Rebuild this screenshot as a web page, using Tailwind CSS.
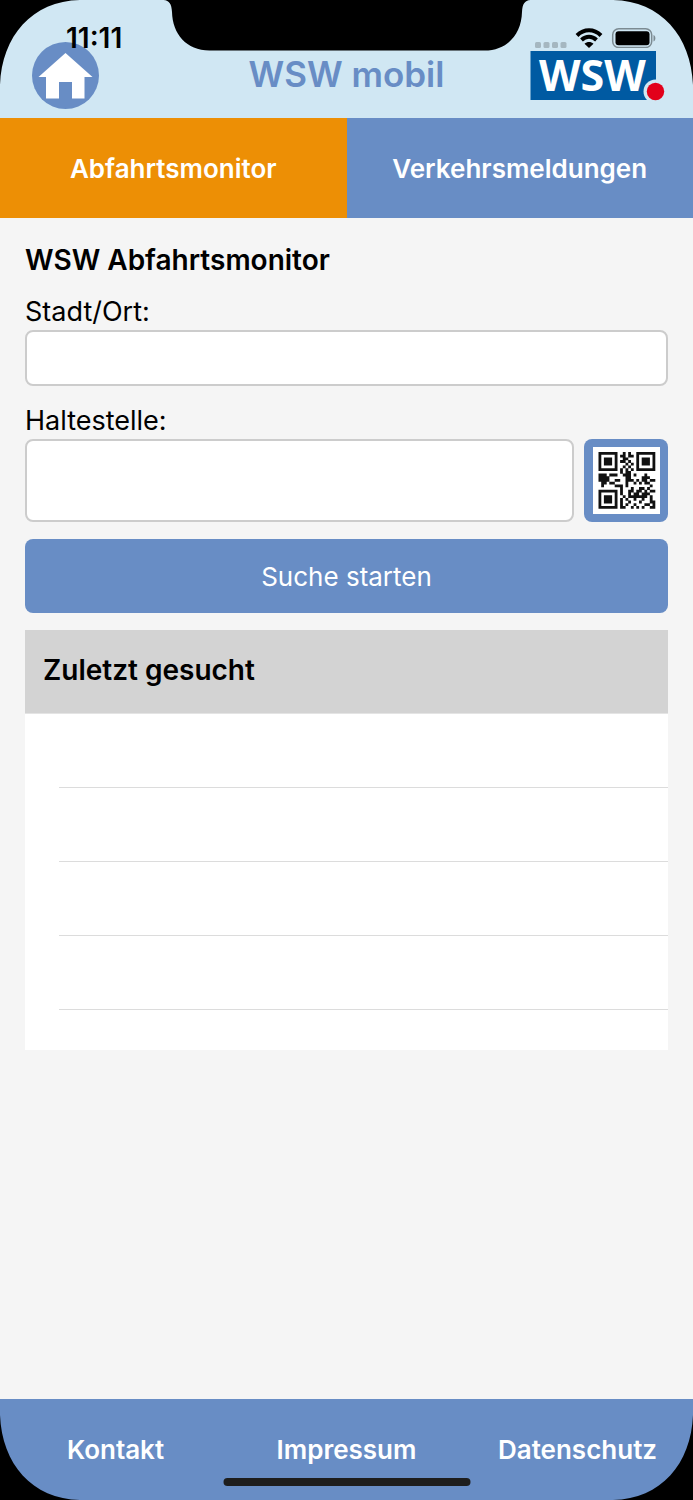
<!DOCTYPE html>
<html lang="de">
<head>
<meta charset="utf-8">
<meta name="viewport" content="width=device-width, initial-scale=1">
<title>WSW mobil</title>
<script src="https://cdn.jsdelivr.net/npm/@tailwindcss/browser@4"></script>
</head>
<body class="bg-black font-['Inter','Liberation_Sans',sans-serif] text-black">
<div class="relative flex min-h-screen flex-col overflow-hidden bg-[#f5f5f5]">

  <header class="relative flex h-[118px] items-end justify-between bg-[#d0e7f3] pr-7 pb-[9px] pl-8">
    <a href="#home" aria-label="Startseite" class="block">
      <svg class="block size-[67px]" viewBox="0 0 67 67" aria-hidden="true">
        <circle cx="33.500" cy="33.500" r="33.500" fill="#688dc5"/>
        <path d="M33.500 11 L60.500 35 H52.500 V56.500 H40 V40 H27 V56.500 H14 V35 H6.500 Z" fill="#fff"/>
      </svg>
    </a>
    <h1 class="absolute inset-x-0 bottom-6 text-center text-[35px] leading-10 font-semibold text-[#688dc5]">WSW mobil</h1>
    <svg class="mb-2 block h-[50px] w-[135px] overflow-visible" viewBox="0 0 135 50" role="img" aria-label="WSW">
      <rect x="0.500" width="125.500" height="49" fill="#005aa2"/>
      <text x="9" y="40" font-family="Open Sans, Noto Sans, sans-serif" font-weight="700" font-size="43" fill="#fff">WSW</text>
      <circle cx="125.500" cy="40.500" r="12" fill="#d0e7f3"/>
      <circle cx="125.500" cy="40.500" r="8.700" fill="#e2001a"/>
    </svg>
    <div class="absolute top-6 left-[66px] text-[28px] leading-7 font-semibold">11:11</div>
    <div class="absolute top-7 right-9 flex h-5 items-center gap-2" aria-hidden="true">
      <svg class="h-5 w-8" viewBox="0 0 32 20" fill="#a5b7c0"><rect x="0" y="14" width="6" height="6" rx="1.500"/><rect x="8.500" y="14" width="6" height="6" rx="1.500"/><rect x="17" y="14" width="6" height="6" rx="1.500"/><rect x="25.500" y="14" width="6" height="6" rx="1.500"/></svg>
      <svg class="h-5 w-[28px]" viewBox="0 0 28 20" fill="none" stroke="#000" stroke-width="4"><path d="M2 7.500 C9 0.500 19 0.500 26 7.500"/><path d="M6.500 12 C11 7.800 17 7.800 21.500 12"/><path d="M14 20 L9.500 15.700 C12 13.300 16 13.300 18.500 15.700Z" fill="#000" stroke="none"/></svg>
      <svg class="h-5 w-[46px]" viewBox="0 0 46 20"><rect x="1.700" y="0.800" width="39" height="18.700" rx="6" fill="none" stroke="#7c8b92" stroke-width="1.500"/><rect x="4.500" y="3.200" width="34" height="14" rx="3"/><path d="M42.500 7 C45 8 45 12.500 42.500 13.500Z" fill="#7c8b92"/></svg>
    </div>
  </header>

  <nav class="grid h-[100px] grid-cols-2 text-[26px] font-semibold text-white">
    <a href="#abfahrt" aria-current="page" class="flex items-center justify-center bg-[#ed8f05]">Abfahrtsmonitor</a>
    <a href="#meldungen" class="flex items-center justify-center bg-[#688dc5]">Verkehrsmeldungen</a>
  </nav>

  <main class="flex-1 px-[25px] pt-6">
    <h2 class="text-[28px] leading-9 font-semibold">WSW Abfahrtsmonitor</h2>
    <form class="mt-4">
      <label for="ort" class="block text-[27px] leading-9">Stadt/Ort:</label>
      <input id="ort" type="text" class="block h-14 w-full rounded-lg border-2 border-[#cccccc] bg-white px-4 text-[27px]">
      <label for="halt" class="mt-[17px] block text-[27px] leading-9">Haltestelle:</label>
      <div class="flex gap-[10px]">
        <input id="halt" type="text" class="h-[83px] min-w-0 flex-1 rounded-lg border-2 border-[#cccccc] bg-white px-4 text-[27px]">
        <button type="button" aria-label="QR-Code scannen" class="flex h-[83px] w-[84px] items-center justify-center rounded-lg bg-[#688dc5]">
          <svg class="size-[67px]" viewBox="0 0 67 67" aria-hidden="true">
            <rect width="67" height="67" fill="#fff"/>
            <path id="qr" transform="translate(5.500 5) scale(2.700)" fill="#111"/>
          </svg>
        </button>
      </div>
      <button type="submit" class="mt-[17px] h-[74px] w-full rounded-lg bg-[#688dc5] text-[26px] text-white">Suche starten</button>
    </form>
    <section class="mt-[17px] bg-white pb-10">
      <h3 class="flex h-[84px] items-center border-b border-[#e4e4e4] bg-[#d3d3d3] px-[18px] pb-1 text-[28px] font-semibold">Zuletzt gesucht</h3>
      <ul class="pl-[34px]">
        <li class="h-[74px] border-b border-[#dcdcdc]"></li>
        <li class="h-[74px] border-b border-[#dcdcdc]"></li>
        <li class="h-[74px] border-b border-[#dcdcdc]"></li>
        <li class="h-[74px] border-b border-[#dcdcdc]"></li>
      </ul>
    </section>
  </main>

  <footer class="grid h-[101px] grid-cols-3 bg-[#688dc5] text-[26px] font-semibold text-white">
    <a href="#kontakt" class="flex items-center justify-center">Kontakt</a>
    <a href="#impressum" class="flex items-center justify-center">Impressum</a>
    <a href="#datenschutz" class="flex items-center justify-center">Datenschutz</a>
  </footer>

  <!-- Device frame: notch, rounded corners, home indicator -->
  <div class="pointer-events-none absolute inset-0" aria-hidden="true">
    <svg class="absolute top-0 left-1/2 h-[51px] w-[367px] -translate-x-1/2" viewBox="0 0 367 51"><path d="M0 0 C6 0.500 8 4 8.500 12 C9 34 23 50.500 46 50.500 H321 C344 50.500 358 34 358.500 12 C359 4 361 0.500 367 0Z"/></svg>
    <svg class="absolute top-0 left-0 size-[86px]" viewBox="0 0 86 86"><path d="M0 0 H80 C32 1 2 36 0 85Z"/></svg>
    <svg class="absolute top-0 right-0 size-[86px] -scale-x-100" viewBox="0 0 86 86"><path d="M0 0 H80 C32 1 2 36 0 85Z"/></svg>
    <svg class="absolute bottom-0 left-0 size-[86px] -scale-y-100" viewBox="0 0 86 86"><path d="M0 0 H80 C32 1 2 36 0 85Z"/></svg>
    <svg class="absolute right-0 bottom-0 size-[86px] rotate-180" viewBox="0 0 86 86"><path d="M0 0 H80 C32 1 2 36 0 85Z"/></svg>
    <div class="absolute bottom-[14px] left-1/2 h-2 w-[247px] -translate-x-1/2 rounded-full bg-[#1e1e1e]"></div>
  </div>
</div>
<script>
  const rows = [
    "111111100101001111111",
    "100000101101101000001",
    "101110100110001011101",
    "101110101101001011101",
    "101110100010101011101",
    "100000100101001000001",
    "111111101010101111111",
    "000000001011000000000",
    "111011100111010001000",
    "111100000011000011100",
    "111100110011101011011",
    "011011000010010101100",
    "010000111010000000010",
    "000000001000100110100",
    "111111101001101101011",
    "100000101001011011100",
    "101110100101111111010",
    "101110101010010010010",
    "101110101001000100011",
    "100000101010010001101",
    "111111101100101010011"
  ];
  document.getElementById("qr").setAttribute("d", rows.map((row, y) =>
    [...row].map((c, x) => c === "1" ? `M${x} ${y}h1.040v1.040h-1.040z` : "").join("")).join(""));
</script>
</body>
</html>
